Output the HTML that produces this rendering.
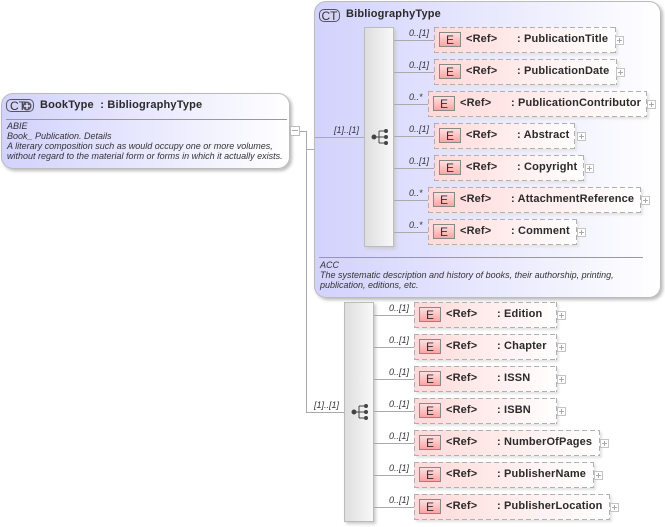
<!DOCTYPE html>
<html><head><meta charset="utf-8">
<style>
html,body{margin:0;padding:0;background:#fff;}
#p{position:relative;width:665px;height:527px;overflow:hidden;font-family:"Liberation Sans",sans-serif;color:#222;}
#p div{position:absolute;box-sizing:border-box;}
.ct{border:1px solid #bbb;border-radius:12px;background:linear-gradient(90deg,#d2d2fd 0%,#e8e8fe 50%,#fff 100%);box-shadow:2px 2px 3px #bbb;}
.bar{width:30px;height:220px;background:linear-gradient(90deg,#dedede,#f8f8f8);border:1px solid #bbb;box-shadow:2px 2px 3px #ccc;}
.el{height:26px;border:1px solid transparent;background-origin:border-box;background-clip:border-box;
background-image:repeating-linear-gradient(90deg,#b0b0b0 0 5px,transparent 5px 8px),repeating-linear-gradient(90deg,#b0b0b0 0 5px,transparent 5px 8px),repeating-linear-gradient(180deg,#b0b0b0 0 5px,transparent 5px 8px),repeating-linear-gradient(180deg,#b0b0b0 0 5px,transparent 5px 8px),linear-gradient(90deg,#ffd9d9,#fff);
background-size:100% 1px,100% 1px,1px 100%,1px 100%,100% 100%;
background-position:0 0,0 100%,0 0,100% 0,0 0;background-repeat:no-repeat;box-shadow:2px 2px 2px #e4e4e4;}
.e{left:4px;top:4px;width:22px;height:15px;border:1px solid #888;background:linear-gradient(180deg,#ffe0e0,#ffa4a4);font-size:12px;line-height:14px;text-align:center;color:#333;}
.r{top:4px;font-size:11px;font-weight:bold;line-height:14px;white-space:nowrap;letter-spacing:.15px;color:#2a2a2a;}
.pl{width:9px;height:9px;border:1px solid #c4c4c4;background:#fff;}
.pl:before{content:"";position:absolute;left:1px;top:3px;width:5px;height:1px;background:#aaa;}
.pl:after{content:"";position:absolute;left:3px;top:1px;width:1px;height:5px;background:#aaa;}
.h{height:1px;background:#aaa;}
.v{width:1px;background:#aaa;}
.m{font-size:9px;font-style:italic;line-height:11px;white-space:nowrap;color:#333;}
.t{font-size:9px;font-style:italic;line-height:10px;white-space:nowrap;color:#333;}
.badge{height:13px;border:1px solid #556;border-radius:5px;background:#d4d4f8;font-size:12px;line-height:12px;color:#333;}
</style></head><body><div id="p">

<div class="h" style="left:296px;top:131px;width:10px"></div>
<div class="v" style="left:306px;top:131px;height:281px"></div>
<div class="h" style="left:306px;top:149px;width:8px"></div>
<div class="h" style="left:306px;top:412px;width:38px"></div>

<div class="ct" style="left:1px;top:93px;width:289px;height:76px">
 <div class="badge" style="left:4px;top:5px;width:28px;padding-left:3px">CT</div>
 <svg style="position:absolute;left:20px;top:7px" width="10" height="10"><circle cx="5" cy="5" r="4.5" fill="#556"/><path d="M2 5H8M5 2V8" stroke="#e8e8ff" stroke-width="1.4"/></svg>
 <div style="left:38px;top:4px;font-size:11px;font-weight:bold;line-height:14px;white-space:nowrap;letter-spacing:.18px;color:#2a2a2a">BookType&nbsp; : BibliographyType</div>
 <div class="h" style="left:4px;top:25px;width:281px;background:#999"></div>
 <div class="t" style="left:5px;top:27px">ABIE<br>Book_ Publication. Details<br>A literary composition such as would occupy one or more volumes,<br>without regard to the material form or forms in which it actually exists.</div>
</div>
<div style="left:290px;top:126px;width:10px;height:10px;border:1px solid #bbb;background:#fff"><div style="left:1px;top:3px;width:6px;height:1px;background:#aaa"></div></div>

<div class="ct" style="left:314px;top:1px;width:347px;height:297px">
 <div class="badge" style="left:4px;top:7px;width:21px;text-align:center">CT</div>
 <div style="left:31px;top:5px;font-size:11px;font-weight:bold;line-height:14px;white-space:nowrap;letter-spacing:.18px;color:#2a2a2a">BibliographyType</div>
 <div class="h" style="left:4px;top:255px;width:324px;background:#999"></div>
 <div class="t" style="left:5px;top:258px">ACC<br>The systematic description and history of books, their authorship, printing,<br>publication, editions, etc.</div>
</div>

<div class="h" style="left:315px;top:137px;width:50px"></div>
<div class="m" style="left:334px;top:125px">[1]..[1]</div>
<div class="m" style="left:314px;top:400px">[1]..[1]</div>

<div class="bar" style="left:364px;top:27px"></div>
<div class="bar" style="left:344px;top:302px"></div>

<svg style="position:absolute;left:0;top:0" width="665" height="527">
 <g fill="#444" stroke="#444" stroke-width="1">
  <path fill="none" d="M374 137H379M379 131V143M379 131H386M379 137H386M379 143H386"/>
  <circle cx="374" cy="137" r="2"/><circle cx="386" cy="131" r="1.5"/><circle cx="386" cy="137" r="1.5"/><circle cx="386" cy="143" r="1.5"/>
  <path fill="none" d="M354 412H359M359 406V418M359 406H366M359 412H366M359 418H366"/>
  <circle cx="354" cy="412" r="2"/><circle cx="366" cy="406" r="1.5"/><circle cx="366" cy="412" r="1.5"/><circle cx="366" cy="418" r="1.5"/>
 </g>
</svg>

<!-- top rows -->
<div class="h" style="left:394px;top:40px;width:40px"></div><div class="m" style="left:409px;top:28px">0..[1]</div>
<div class="el" style="left:434px;top:27px;width:182px"><div class="e">E</div><div class="r" style="left:31px">&lt;Ref&gt;</div><div class="r" style="left:82px">: PublicationTitle</div></div>
<div class="pl" style="left:615px;top:36px"></div>

<div class="h" style="left:394px;top:72px;width:40px"></div><div class="m" style="left:409px;top:60px">0..[1]</div>
<div class="el" style="left:434px;top:59px;width:183px"><div class="e">E</div><div class="r" style="left:31px">&lt;Ref&gt;</div><div class="r" style="left:82px">: PublicationDate</div></div>
<div class="pl" style="left:616px;top:68px"></div>

<div class="h" style="left:394px;top:104px;width:34px"></div><div class="m" style="left:409px;top:92px">0..*</div>
<div class="el" style="left:428px;top:91px;width:219px"><div class="e">E</div><div class="r" style="left:31px">&lt;Ref&gt;</div><div class="r" style="left:82px">: PublicationContributor</div></div>
<div class="pl" style="left:647px;top:100px"></div>

<div class="h" style="left:394px;top:136px;width:40px"></div><div class="m" style="left:409px;top:124px">0..[1]</div>
<div class="el" style="left:434px;top:123px;width:141px"><div class="e">E</div><div class="r" style="left:31px">&lt;Ref&gt;</div><div class="r" style="left:82px">: Abstract</div></div>
<div class="pl" style="left:577px;top:132px"></div>

<div class="h" style="left:394px;top:168px;width:40px"></div><div class="m" style="left:409px;top:156px">0..[1]</div>
<div class="el" style="left:434px;top:155px;width:150px"><div class="e">E</div><div class="r" style="left:31px">&lt;Ref&gt;</div><div class="r" style="left:82px">: Copyright</div></div>
<div class="pl" style="left:585px;top:164px"></div>

<div class="h" style="left:394px;top:200px;width:34px"></div><div class="m" style="left:409px;top:188px">0..*</div>
<div class="el" style="left:428px;top:187px;width:213px"><div class="e">E</div><div class="r" style="left:31px">&lt;Ref&gt;</div><div class="r" style="left:82px">: AttachmentReference</div></div>
<div class="pl" style="left:641px;top:196px"></div>

<div class="h" style="left:394px;top:232px;width:34px"></div><div class="m" style="left:409px;top:220px">0..*</div>
<div class="el" style="left:428px;top:219px;width:149px"><div class="e">E</div><div class="r" style="left:31px">&lt;Ref&gt;</div><div class="r" style="left:82px">: Comment</div></div>
<div class="pl" style="left:577px;top:228px"></div>

<!-- bottom rows -->
<div class="h" style="left:374px;top:315px;width:40px"></div><div class="m" style="left:389px;top:303px">0..[1]</div>
<div class="el" style="left:414px;top:302px;width:143px"><div class="e">E</div><div class="r" style="left:31px">&lt;Ref&gt;</div><div class="r" style="left:82px">: Edition</div></div>
<div class="pl" style="left:557px;top:311px"></div>

<div class="h" style="left:374px;top:347px;width:40px"></div><div class="m" style="left:389px;top:335px">0..[1]</div>
<div class="el" style="left:414px;top:334px;width:143px"><div class="e">E</div><div class="r" style="left:31px">&lt;Ref&gt;</div><div class="r" style="left:82px">: Chapter</div></div>
<div class="pl" style="left:557px;top:343px"></div>

<div class="h" style="left:374px;top:379px;width:40px"></div><div class="m" style="left:389px;top:367px">0..[1]</div>
<div class="el" style="left:414px;top:366px;width:143px"><div class="e">E</div><div class="r" style="left:31px">&lt;Ref&gt;</div><div class="r" style="left:82px">: ISSN</div></div>
<div class="pl" style="left:557px;top:375px"></div>

<div class="h" style="left:374px;top:411px;width:40px"></div><div class="m" style="left:389px;top:399px">0..[1]</div>
<div class="el" style="left:414px;top:398px;width:143px"><div class="e">E</div><div class="r" style="left:31px">&lt;Ref&gt;</div><div class="r" style="left:82px">: ISBN</div></div>
<div class="pl" style="left:557px;top:407px"></div>

<div class="h" style="left:374px;top:443px;width:40px"></div><div class="m" style="left:389px;top:431px">0..[1]</div>
<div class="el" style="left:414px;top:430px;width:186px"><div class="e">E</div><div class="r" style="left:31px">&lt;Ref&gt;</div><div class="r" style="left:82px">: NumberOfPages</div></div>
<div class="pl" style="left:600px;top:439px"></div>

<div class="h" style="left:374px;top:475px;width:40px"></div><div class="m" style="left:389px;top:463px">0..[1]</div>
<div class="el" style="left:414px;top:462px;width:180px"><div class="e">E</div><div class="r" style="left:31px">&lt;Ref&gt;</div><div class="r" style="left:82px">: PublisherName</div></div>
<div class="pl" style="left:594px;top:471px"></div>

<div class="h" style="left:374px;top:507px;width:40px"></div><div class="m" style="left:389px;top:495px">0..[1]</div>
<div class="el" style="left:414px;top:494px;width:196px"><div class="e">E</div><div class="r" style="left:31px">&lt;Ref&gt;</div><div class="r" style="left:82px">: PublisherLocation</div></div>
<div class="pl" style="left:610px;top:503px"></div>

</div></body></html>
